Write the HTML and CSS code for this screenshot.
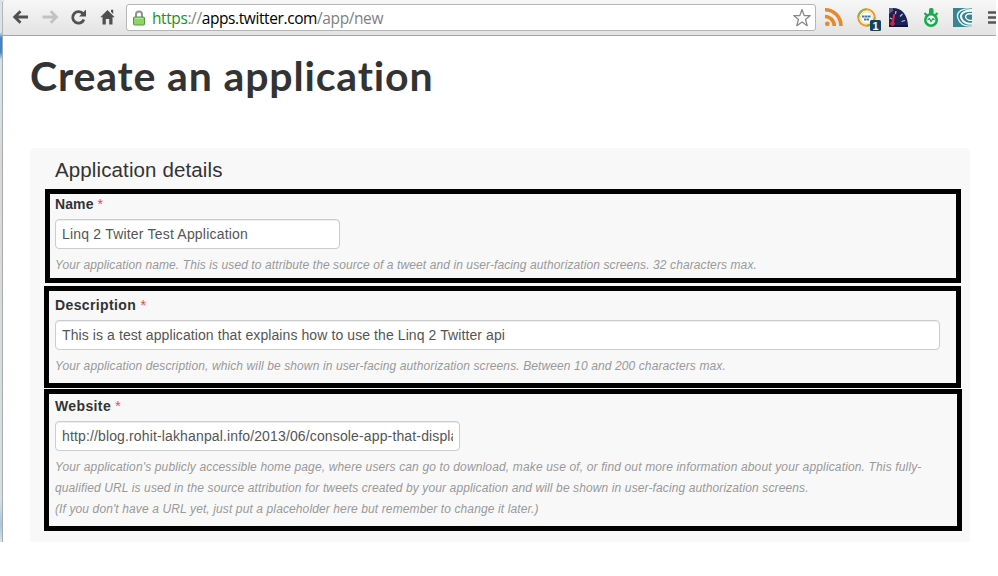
FILE: index.html
```html
<!DOCTYPE html>
<html lang="en">
<head>
<meta charset="utf-8">
<title>Create an application</title>
<link rel="stylesheet" href="styles.css">
</head>
<body>
<div class="window">
  <header class="toolbar">
    <svg class="nav" viewBox="0 0 110 24" width="110" height="24">
      <path d="M21 12H8M13.500 6.200 7.700 12 13.500 17.800" fill="none" stroke="#505050" stroke-width="2.800"/>
      <path d="M35.500 12H49M43.700 6.200 49.500 12 43.700 17.800" fill="none" stroke="#c2c2c2" stroke-width="2.800"/>
      <path d="M76.200 9A5.800 5.800 0 1 0 76.900 14.500" fill="none" stroke="#505050" stroke-width="2.800"/>
      <path d="M79 4.500V11.500H72Z" fill="#505050"/>
      <path d="M100.500 5 107.700 12.300H105.500V19.500H102.200V14H98.800V19.500H95.500V12.300H93.300ZM104 4.800H106.200V9L104 6.800Z" fill="#505050"/>
    </svg>
    <div class="omnibox">
      <svg class="lock" viewBox="0 0 12 16" width="12" height="16">
        <path d="M3 8V4.500A3 3 0 0 1 9 4.500V8" fill="none" stroke="#929292" stroke-width="2"/>
        <rect x=".5" y="7" width="11" height="8" rx="1" fill="#8fd365" stroke="#53984a"/>
        <path d="M2 8.500H10" stroke="#b7e69a"/>
      </svg>
      <span class="url"><span class="secure">https</span><span class="dim">://</span>apps.twitter.com<span class="dim">/app/new</span></span>
      <svg class="star" viewBox="0 0 20 20" width="20" height="20">
        <path d="M10 1.500 12.200 7.600H18.300L13.500 11.400 15.200 17.700 10 14 4.800 17.700 6.500 11.400 1.700 7.600H7.800Z" fill="#fff" stroke="#888" stroke-width="1.300" stroke-linejoin="round"/>
      </svg>
    </div>
    <svg class="extensions" viewBox="0 0 178 36" width="178" height="36">
      <g fill="none" stroke="#e6882d" stroke-width="3.600">
        <path d="M7 9.800A16 16 0 0 1 23 26M7 16.500A9.500 9.500 0 0 1 16.300 26"/>
      </g>
      <circle cx="9.300" cy="23.800" r="2.400" fill="#e6882d"/>
      <circle cx="48.500" cy="17.500" r="8.200" fill="#fff" stroke="#f29a22" stroke-width="2"/>
      <path d="M40.300 17.500A8.200 8.200 0 0 1 48.500 9.300M56.700 17.500A8.200 8.200 0 0 1 48.500 25.700" fill="none" stroke="#8cb63e" stroke-width="2"/>
      <circle cx="48.500" cy="17.500" r="5.800" fill="none" stroke="#f6cf65" stroke-width=".8"/>
      <path d="M44 16.500H53M46 19.500H51" stroke="#447b9c" stroke-width="1.800" stroke-dasharray="2.500 .4"/>
      <rect x="52" y="20" width="11" height="11" rx="1.500" fill="#173f61"/>
      <text class="badge" x="57.600" y="29.500">1</text>
      <path d="M71 8H75C84 8 90 15 90 27H71Z" fill="#1b2057"/>
      <path d="M71 8H75V11L71 14Z" fill="#596086"/>
      <path d="M78 11 77.500 14M84.500 14 82 16.500M87 20.500 83.500 21.500M72 18 74 19" stroke="#c4c9df" stroke-width="1.200"/>
      <path d="M71 26H90" stroke="#111437" stroke-width="2"/>
      <path d="M76.300 14 74.500 24" stroke="#ef2535" stroke-width="2"/>
      <circle cx="74.500" cy="23.800" r="2.300" fill="#ca263d"/>
      <circle cx="113" cy="20" r="5.700" fill="#fff" stroke="#15ad4b" stroke-width="2.600"/>
      <rect x="111" y="8" width="4.500" height="6.500" rx="1.500" fill="#15ad4b"/>
      <path d="M106.500 13 109 15.500M119.500 13 117 15.500" stroke="#15ad4b" stroke-width="2.200"/>
      <path d="M109.500 20 111.500 18.500 113 21.500 115 18.500 116.500 20" fill="none" stroke="#15ad4b" stroke-width="1.300"/>
      <rect x="135" y="8" width="19" height="19" fill="#398493"/>
      <path d="M154 9.500C145 7 137.500 12 140 18.500 142 24.500 148 26.500 154 26" fill="none" stroke="#e9f5f7" stroke-width="1.300"/>
      <path d="M154 11C146 10 141.500 14 143.500 18.500 145 22.500 150 24.500 154 23.500" fill="none" stroke="#f4fbfc" stroke-width="2"/>
      <path d="M154 14C149 13 146.500 15.500 148 18 149 20 152 20.800 154 20.300" fill="none" stroke="#fff" stroke-width="1.300"/>
      <path d="M170 12.500H178M170 17.500H178M170 22.500H178" stroke="#555" stroke-width="2.600"/>
    </svg>
  </header>
  <main class="page">
    <h1>Create an application</h1>
    <form class="panel">
      <h2>Application details</h2>
      <section class="field name">
        <label>Name <span class="required">*</span></label>
        <div class="input">Linq 2 Twiter Test Application</div>
        <p>Your application name. This is used to attribute the source of a tweet and in user-facing authorization screens. 32 characters max.</p>
      </section>
      <section class="field description">
        <label>Description <span class="required">*</span></label>
        <div class="input">This is a test application that explains how to use the Linq 2 Twitter api</div>
        <p>Your application description, which will be shown in user-facing authorization screens. Between 10 and 200 characters max.</p>
      </section>
      <section class="field website">
        <label>Website <span class="required">*</span></label>
        <div class="input"><span class="value">http://blog.rohit-lakhanpal.info/2013/06/console-app-that-displa</span></div>
        <p><span class="lead">Your application's publicly accessible home page, where users can go to download, make use of, or find out more information about your application. This fully-</span><br>qualified URL is used in the source attribution for tweets created by your application and will be shown in user-facing authorization screens.<br>(If you don't have a URL yet, just put a placeholder here but remember to change it later.)</p>
      </section>
    </form>
  </main>
</div>
</body>
</html>
```
FILE: styles.css
```css
* { box-sizing: border-box; }
body { margin: 0; height: 576px; overflow: hidden; background: #fff; font-family: "Liberation Sans", Arial, sans-serif; }
.window { width: 996px; height: 542px; display: grid; grid-template-rows: 36px 1fr; background: linear-gradient(#d8e4e9 0 32px, #3c86c9 38px 52px, #d5e4e8 60px 100px, #d8d8d8 160px, #d5e0e3 500px, #a7c6df 525px, #d5e4e8) left / 2px 100% no-repeat; }
.toolbar { display: flex; margin-left: 2px; border-bottom: 1px solid #a6a6a6; border-left: 1px solid #b5b5b5; border-top-left-radius: 3px; background: linear-gradient(#f7f7f7, #e3e3e3); }
.nav { margin: 5px 0 0 4px; flex: none; }
.omnibox { display: flex; align-items: center; width: 690px; height: 27px; margin: 4px 0 0 9px; padding: 0 3px 0 6px; border: 1px solid #b5b5b5; border-radius: 3px; background: #fff; flex: none; }
.lock { margin-right: 7px; flex: none; }
.url { flex: 1; font: 15.500px/24px "Open Sans", sans-serif; letter-spacing: -.4px; white-space: nowrap; color: #000; }
.secure { color: #16931a; }
.dim { color: #808080; }
.extensions { margin-left: 2px; flex: none; }
.badge { font: bold 11px "Liberation Sans", sans-serif; fill: #fff; text-anchor: middle; }
.page { margin-left: 2px; border-left: 1px solid #aaa; padding: 12px 26px 0 27px; background: #fff; }
h1 { margin: 0; height: 100px; font: 700 41px/56px "Proxima Nova", Lato, sans-serif; letter-spacing: .85px; color: #333; white-space: nowrap; }
.panel { height: 394px; padding: 7px 0 0 14px; border-radius: 4px 4px 0 0; background: #f8f8f8; }
h2 { margin: 0 0 4px 11px; font-size: 20.500px; line-height: 30px; font-weight: 400; letter-spacing: .12px; color: #333; }
.field { border: 5px solid #000; }
.name { width: 916px; height: 94px; margin: 0 0 3px 1px; padding: 0 5px; }
.description { width: 917px; height: 102px; margin-bottom: 1px; padding: 4px 6px; }
.website { width: 918px; height: 142px; padding: 2px 6px; }
label { display: block; font-size: 14px; line-height: 20px; font-weight: 700; letter-spacing: .38px; color: #333; }
.name label { letter-spacing: .1px; }
.required { font-weight: 400; color: #ff3c3c; }
.input { width: 285px; height: 30px; margin-top: 5px; padding: 0 6px; border: 1px solid #ccc; border-radius: 4px; background: #fff; box-shadow: inset 0 1px 1px rgba(0,0,0,.075); font-size: 14px; line-height: 28px; letter-spacing: .2px; color: #555; white-space: nowrap; }
.description .input { width: 885px; letter-spacing: .09px; }
.website .input { width: 405px; letter-spacing: .14px; }
.value { display: block; overflow: hidden; }
p { margin: 6px 0 0; font-size: 12px; line-height: 21px; font-style: italic; letter-spacing: .115px; color: #999; white-space: nowrap; }
.name p { letter-spacing: .1px; }
.lead { letter-spacing: .145px; }
```
